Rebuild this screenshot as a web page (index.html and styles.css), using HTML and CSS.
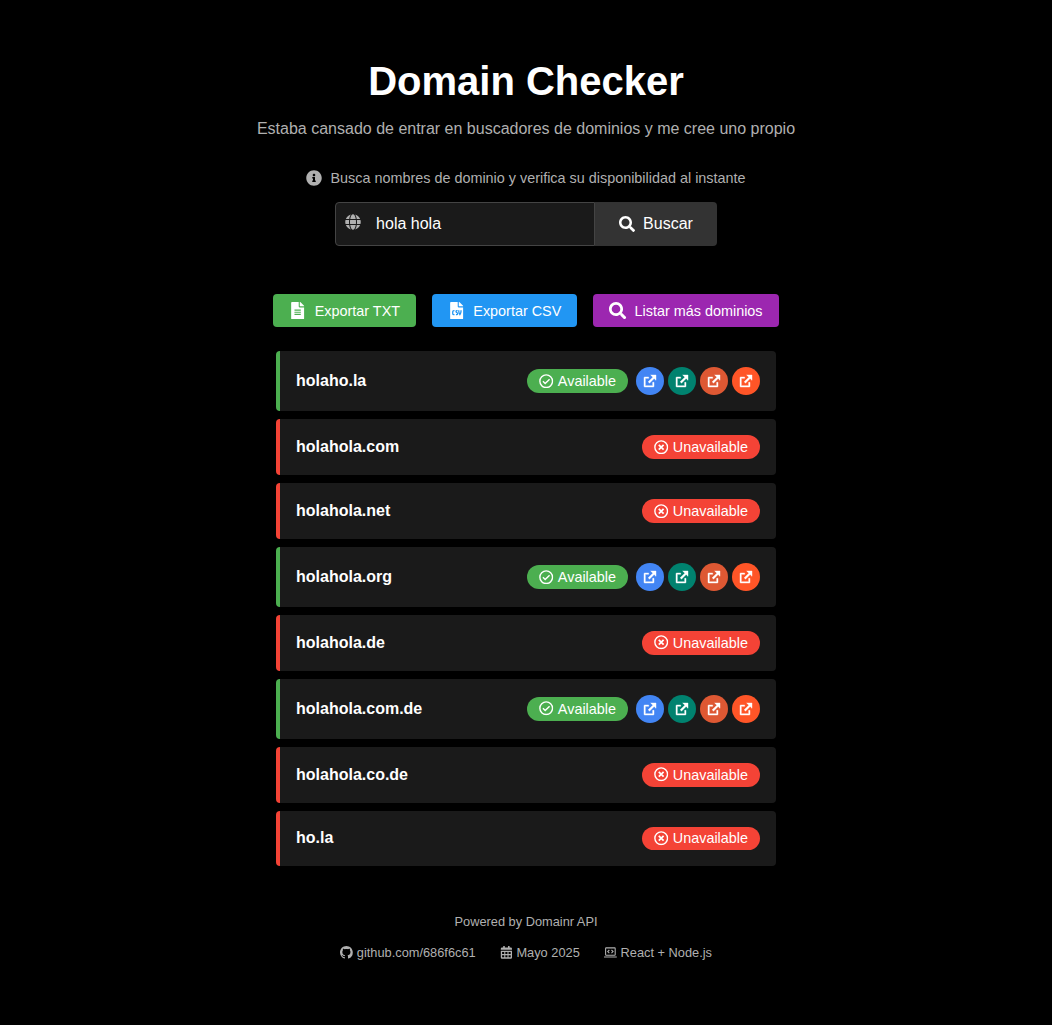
FILE: index.html
```html
<!DOCTYPE html>
<html lang="es">
<head>
<meta charset="utf-8">
<title>Domain Checker</title>
<link rel="stylesheet" href="styles.css">
</head>
<body>
<svg class="sprite" aria-hidden="true">
  <symbol id="search" viewBox="0 0 512 512"><path d="M505 442.7L405.3 343c-4.5-4.5-10.6-7-17-7H372c27.6-35.3 44-79.7 44-128C416 93.1 322.9 0 208 0S0 93.1 0 208s93.1 208 208 208c48.3 0 92.7-16.4 128-44v16.3c0 6.4 2.5 12.5 7 17l99.7 99.7c9.4 9.4 24.6 9.4 33.9 0l28.3-28.3c9.4-9.4 9.4-24.6.1-34zM208 336c-70.7 0-128-57.2-128-128 0-70.7 57.2-128 128-128 70.7 0 128 57.2 128 128 0 70.7-57.2 128-128 128z"/></symbol>
  <symbol id="check" viewBox="0 0 512 512"><g fill="none" stroke="currentColor" stroke-width="50"><circle cx="256" cy="256" r="225"/><path d="M140 262l80 80 156-156"/></g></symbol>
  <symbol id="cross" viewBox="0 0 512 512"><g fill="none" stroke="currentColor"><circle cx="256" cy="256" r="225" stroke-width="50"/><path stroke-width="62" d="M170 170l172 172M342 170L170 342"/></g></symbol>
  <symbol id="link" viewBox="0 0 24 24"><path class="bold" d="M10 6v2H5v11h11v-5h2v6a1 1 0 0 1-1 1H4a1 1 0 0 1-1-1V7a1 1 0 0 1 1-1h6zm11-3v8l-2.794-2.793-6.999 7-1.914-1.914 6.999-7L13 3h8z"/></symbol>
</svg>
<main class="app">
  <header class="header">
    <h1 class="title">Domain Checker</h1>
    <p class="subtitle">Estaba cansado de entrar en buscadores de dominios y me cree uno propio</p>
  </header>

  <p class="info">
    <svg class="icon-16" viewBox="0 0 512 512"><path d="M256 8C119.043 8 8 119.083 8 256c0 136.997 111.043 248 248 248s248-111.003 248-248C504 119.083 392.957 8 256 8zm0 110c23.196 0 42 18.804 42 42s-18.804 42-42 42-42-18.804-42-42 18.804-42 42-42zm56 254c0 6.627-5.373 12-12 12h-88c-6.627 0-12-5.373-12-12v-24c0-6.627 5.373-12 12-12h12v-64h-12c-6.627 0-12-5.373-12-12v-24c0-6.627 5.373-12 12-12h64c6.627 0 12 5.373 12 12v100h12c6.627 0 12 5.373 12 12v24z"/></svg>
    <span>Busca nombres de dominio y verifica su disponibilidad al instante</span>
  </p>

  <div class="search">
    <div class="field">
      <svg class="icon-16 globe" viewBox="0 0 496 512"><path d="M336.5 160C322 70.7 287.8 8 248 8s-74 62.7-88.5 152h177zM152 256c0 22.2 1.2 43.5 3.3 64h185.3c2.1-20.5 3.3-41.8 3.3-64s-1.2-43.5-3.3-64H155.3c-2.1 20.5-3.3 41.8-3.3 64zm324.7-96c-28.6-67.9-86.5-120.4-158-141.6 24.4 33.8 41.2 84.7 50 141.6h108zM177.2 18.4C105.8 39.6 47.8 92.1 19.3 160h108c8.7-56.9 25.5-107.8 49.9-141.6zM487.4 192H372.7c2.1 21 3.3 42.5 3.3 64s-1.2 43-3.3 64h114.6c5.5-20.5 8.6-41.8 8.6-64s-3.1-43.5-8.5-64zM120 256c0-21.5 1.2-43 3.3-64H8.6C3.2 212.5 0 233.8 0 256s3.2 43.5 8.6 64h114.6c-2-21-3.2-42.5-3.2-64zm39.5 96c14.5 89.3 48.7 152 88.5 152s74-62.7 88.5-152h-177zm159.3 141.6c71.4-21.2 129.4-73.7 158-141.6h-108c-8.8 56.9-25.6 107.8-50 141.6zM19.3 352c28.6 67.9 86.5 120.4 158 141.6-24.4-33.8-41.2-84.7-50-141.6h-108z"/></svg>
      <span>hola hola</span>
    </div>
    <button class="submit"><svg class="icon-16"><use href="#search"/></svg>Buscar</button>
  </div>

  <div class="actions">
    <button class="action txt"><svg viewBox="0 0 384 512"><path d="M224 136V0H24C10.7 0 0 10.7 0 24v464c0 13.3 10.7 24 24 24h336c13.3 0 24-10.7 24-24V160H248c-13.2 0-24-10.8-24-24zm64 236c0 6.6-5.4 12-12 12H108c-6.6 0-12-5.4-12-12v-8c0-6.6 5.4-12 12-12h168c6.6 0 12 5.4 12 12v8zm0-64c0 6.6-5.4 12-12 12H108c-6.6 0-12-5.4-12-12v-8c0-6.6 5.4-12 12-12h168c6.6 0 12 5.4 12 12v8zm0-72v8c0 6.6-5.4 12-12 12H108c-6.6 0-12-5.4-12-12v-8c0-6.6 5.4-12 12-12h168c6.6 0 12 5.4 12 12zm96-114.1v6.1H256V0h6.1c6.4 0 12.5 2.5 17 7l97.9 98c4.5 4.5 7 10.6 7 16.9z"/></svg>Exportar TXT</button>
    <button class="action csv"><svg viewBox="0 0 384 512"><path d="M224 136V0H24C10.7 0 0 10.7 0 24v464c0 13.3 10.7 24 24 24h336c13.3 0 24-10.7 24-24V160H248c-13.2 0-24-10.8-24-24zM384 121.900v6.100H256V0h6.100c6.400 0 12.500 2.500 17 7l97.900 98c4.500 4.500 7 10.600 7 16.900z"/><path class="mark" d="M128 256h-16q-36 0-36 36v48q0 36 36 36h16M220 256h-20c-34 0-34 38-10 52l16 12c26 18 20 56-12 56h-22M256 242v34c0 48 20 84 33 102 13-18 33-54 33-102v-34"/></svg>Exportar CSV</button>
    <button class="action more"><svg><use href="#search"/></svg>Listar más dominios</button>
  </div>

  <ul class="results">
    <li class="row ok"><span class="domain">holaho.la</span><span class="badge"><svg><use href="#check"/></svg>Available</span><span class="links"><a class="l1"><svg><use href="#link"/></svg></a><a class="l2"><svg><use href="#link"/></svg></a><a class="l3"><svg><use href="#link"/></svg></a><a class="l4"><svg><use href="#link"/></svg></a></span></li>
    <li class="row"><span class="domain">holahola.com</span><span class="badge"><svg><use href="#cross"/></svg>Unavailable</span></li>
    <li class="row"><span class="domain">holahola.net</span><span class="badge"><svg><use href="#cross"/></svg>Unavailable</span></li>
    <li class="row ok"><span class="domain">holahola.org</span><span class="badge"><svg><use href="#check"/></svg>Available</span><span class="links"><a class="l1"><svg><use href="#link"/></svg></a><a class="l2"><svg><use href="#link"/></svg></a><a class="l3"><svg><use href="#link"/></svg></a><a class="l4"><svg><use href="#link"/></svg></a></span></li>
    <li class="row"><span class="domain">holahola.de</span><span class="badge"><svg><use href="#cross"/></svg>Unavailable</span></li>
    <li class="row ok"><span class="domain">holahola.com.de</span><span class="badge"><svg><use href="#check"/></svg>Available</span><span class="links"><a class="l1"><svg><use href="#link"/></svg></a><a class="l2"><svg><use href="#link"/></svg></a><a class="l3"><svg><use href="#link"/></svg></a><a class="l4"><svg><use href="#link"/></svg></a></span></li>
    <li class="row"><span class="domain">holahola.co.de</span><span class="badge"><svg><use href="#cross"/></svg>Unavailable</span></li>
    <li class="row"><span class="domain">ho.la</span><span class="badge"><svg><use href="#cross"/></svg>Unavailable</span></li>
  </ul>

  <footer class="footer">
    <p>Powered by Domainr API</p>
    <div class="meta">
      <span><svg viewBox="0 0 16 16"><path d="M8 0C3.58 0 0 3.58 0 8c0 3.54 2.29 6.53 5.47 7.59.4.07.55-.17.55-.38 0-.19-.01-.82-.01-1.49-2.010.37-2.530-.49-2.690-.94-.09-.23-.48-.94-.82-1.130-.28-.15-.68-.52-.01-.53.63-.01 1.080.58 1.230.82.72 1.210 1.870.87 2.330.66.07-.52.28-.87.51-1.070-1.780-.2-3.640-.89-3.640-3.950 0-.87.31-1.590.82-2.150-.08-.2-.36-1.020.08-2.120 0 0 .67-.21 2.200.82.64-.18 1.320-.27 2-.27s1.360.09 2 .27c1.530-1.040 2.200-.82 2.200-.82.44 1.100.16 1.920.08 2.120.51.56.82 1.270.82 2.150 0 3.070-1.870 3.750-3.650 3.950.29.25.54.73.54 1.480 0 1.070-.01 1.930-.01 2.200 0 .21.15.46.55.38A8.010 8.010 0 0016 8c0-4.420-3.580-8-8-8z"/></svg>github.com/686f6c61</span>
      <span><svg viewBox="0 0 448 512"><path fill-rule="evenodd" d="M48 64h48V12q0-12 12-12h40q12 0 12 12v52h128V12q0-12 12-12h40q12 0 12 12v52h48q48 0 48 48v40H0v-40q0-48 48-48zM0 192h448v272q0 48-48 48H48q-48 0-48-48zM52 240v80h86v-80zM181 240v80h86v-80zM310 240v80h86v-80zM52 368v80h86v-80zM181 368v80h86v-80zM310 368v80h86v-80z"/></svg>Mayo 2025</span>
      <span><svg viewBox="0 0 24 24"><path fill-rule="evenodd" d="M4 2.500h16a2 2 0 0 1 2 2v12a2 2 0 0 1-2 2H4a2 2 0 0 1-2-2v-12a2 2 0 0 1 2-2zM4 4.500v12h16v-12zM0 19.500h24v2H0z"/><path class="code" d="M10 7.500l-3 3 3 3M14 7.500l3 3-3 3"/></svg>React + Node.js</span>
    </div>
  </footer>
</main>
</body>
</html>
```
FILE: styles.css
```css
* { box-sizing: border-box; margin: 0; padding: 0; }
body { background: #000; color: #fff; font: 16px "Liberation Sans", Arial, sans-serif; }
svg { display: block; flex: none; fill: currentColor; }
.sprite { width: 0; height: 0; position: absolute; }
button { border: 0; color: #fff; font: inherit; display: flex; align-items: center; }
.app { display: flex; flex-direction: column; align-items: center; padding-top: 58px; }
.header { text-align: center; }
.title { font-size: 40px; line-height: 46px; margin-bottom: 16px; }
.subtitle { color: #b0b0b0; line-height: 18px; font-size: 16px; }
.info { display: flex; align-items: center; gap: 8px; margin-top: 31px; height: 18px; color: #b0b0b0; font-size: 14.4px; }
.icon-16 { width: 16px; height: 16px; }
.search { display: flex; height: 44px; margin-top: 15px; }
.field { display: flex; align-items: center; gap: 15px; width: 260px; padding-left: 9px; background: #1a1a1a; border: 1px solid #444; border-radius: 4px 0 0 4px; }
.globe { color: #b0b0b0; margin-bottom: 4px; }
.submit { gap: 8px; padding: 0 24px; background: #333; border-radius: 0 4px 4px 0; }
.actions { display: flex; gap: 16px; margin-top: 48px; }
.action { height: 33px; gap: 8px; padding: 0 16px; border-radius: 4px; font-size: 14.4px; }
.action svg { width: 17.28px; height: 17.28px; }
.txt { background: #4caf50; }
.csv { background: #2196f3; }
.more { background: #9c27b0; }
.mark { fill: none; stroke: #2196f3; stroke-width: 38; }
.results { list-style: none; width: 500px; margin-top: 24px; display: flex; flex-direction: column; gap: 8px; }
.row { display: flex; align-items: center; gap: 8px; padding: 16px; background: #1a1a1a; border-left: 4px solid #f44336; border-radius: 4px; }
.ok { border-left-color: #4caf50; }
.domain { flex: 1; font-weight: bold; }
.badge { display: flex; align-items: center; gap: 4px; height: 23.875px; padding: 0 12px; border-radius: 12px; background: #f44336; font-size: 14.4px; }
.ok .badge { background: #4caf50; }
.badge svg { width: 14.4px; height: 14.4px; }
.links { display: flex; gap: 4px; }
.links a { display: flex; align-items: center; justify-content: center; width: 28px; height: 28px; border-radius: 50%; }
.links svg { width: 16px; height: 16px; }
.bold { stroke: currentColor; stroke-width: .6; }
.l1 { background: #4285f4; }
.l2 { background: #00826f; }
.l3 { background: #de5833; }
.l4 { background: #ff5527; }
.footer { margin-top: 48px; text-align: center; color: #b0b0b0; font-size: 12.8px; line-height: 15px; }
.meta { display: flex; gap: 24px; margin-top: 16px; }
.meta span { display: flex; align-items: center; gap: 4px; }
.meta svg { width: 12.8px; height: 12.8px; }
.code { fill: none; stroke: currentColor; stroke-width: 2; }
```
